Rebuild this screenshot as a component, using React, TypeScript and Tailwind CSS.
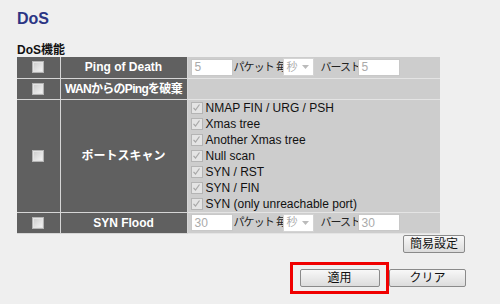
import React from "react";

const font = { fontFamily: '"Liberation Sans", Arial, "Noto Sans CJK JP", sans-serif' };

function Box({ checked }: { checked?: boolean }) {
  return (
    <span className="inline-flex h-[12px] w-[12px] items-center justify-center border border-[#b4b4b4] bg-[#e4e4e4]">
      {checked ? (
        <svg width="9" height="9" viewBox="0 0 9 9">
          <path d="M1.5 4.8 L3.5 7 L7.5 1.5" fill="none" stroke="#a8a8a8" strokeWidth="1.2" />
        </svg>
      ) : (
        <span className="h-[8px] w-[8px] bg-gradient-to-br from-[#cfcfcf] to-[#f2f2f2]" />
      )}
    </span>
  );
}

function Rate({ n }: { n: string }) {
  return (
    <div className="flex items-center text-[11px] text-[#222]">
      <span className="flex h-[17px] w-[42px] items-center border border-[#c8c8c8] bg-white pl-[3px] text-[12px] text-[#aaa]">{n}</span>
      <span className="ml-[1px] w-[48px] whitespace-nowrap tracking-[-0.9px]">パケット 毎</span>
      <span className="ml-[1px] flex h-[18px] w-[31px] items-center justify-between border border-[#d4d4d4] bg-white pl-[3px] pr-[4px] text-[#aaa]">
        秒
        <svg width="7" height="4" viewBox="0 0 7 4"><path d="M0 0 L7 0 L3.5 4 Z" fill="#bbb" /></svg>
      </span>
      <span className="ml-[7px] w-[37px] whitespace-nowrap tracking-[-1px]">バースト</span>
      <span className="flex h-[17px] w-[42px] items-center border border-[#c8c8c8] bg-white pl-[3px] text-[12px] text-[#aaa]">{n}</span>
    </div>
  );
}

export default function App() {
  const scans = [
    "NMAP FIN / URG / PSH",
    "Xmas tree",
    "Another Xmas tree",
    "Null scan",
    "SYN / RST",
    "SYN / FIN",
    "SYN (only unreachable port)",
  ];
  const dark = "bg-[#606060] text-white font-bold text-[12px] text-center border-r border-b border-[#d6d6d6] p-0";
  const light = "bg-[#cdcdcd] border-b border-[#e4e4e4] pl-[3px] pr-0 py-0";
  const btn = "h-[18px] rounded-[2px] border border-[#8a8a8a] bg-gradient-to-b from-[#f8f8f8] to-[#dcdcdc] text-[12px] leading-[16px] text-[#111]";
  return (
    <div className="h-[304px] w-[500px] bg-[#efefef] px-[17px] pt-[9px]" style={font}>
      <div className="text-[16px] font-bold leading-[20px] text-[#2b3584]">DoS</div>
      <div className="mt-[15px] text-[12px] font-bold leading-[12px] text-[#111]">DoS機能</div>
      <table className="mt-[1px] w-[423px] table-fixed border-collapse">
        <colgroup>
          <col className="w-[43px]" />
          <col className="w-[127px]" />
          <col />
        </colgroup>
        <tbody>
          <tr className="h-[21px]">
            <td className={dark}><div className="flex justify-center"><Box /></div></td>
            <td className={dark}>Ping of Death</td>
            <td className={light}><Rate n="5" /></td>
          </tr>
          <tr className="h-[21px]">
            <td className={dark}><div className="flex justify-center"><Box /></div></td>
            <td className={`${dark} whitespace-nowrap text-[11px] tracking-[-0.7px]`}>WANからのPingを破棄</td>
            <td className={light}></td>
          </tr>
          <tr className="h-[112px]">
            <td className={dark}><div className="flex justify-center"><Box /></div></td>
            <td className={`${dark} text-[11px]`}>ポートスキャン</td>
            <td className={light}>
              <div className="flex flex-col">
                {scans.map((s) => (
                  <div key={s} className="flex h-[16px] items-center gap-[3px] text-[12px] text-[#111]">
                    <Box checked />
                    <span>{s}</span>
                  </div>
                ))}
              </div>
            </td>
          </tr>
          <tr className="h-[21px]">
            <td className={dark}><div className="flex justify-center"><Box /></div></td>
            <td className={dark}>SYN Flood</td>
            <td className={light}><Rate n="30" /></td>
          </tr>
        </tbody>
      </table>
      <div className="flex w-[448px] justify-end pt-[1px]">
        <button className={`${btn} w-[62px]`}>簡易設定</button>
      </div>
      <div className="mt-[9px] flex w-[449px] justify-end">
        <div className="flex h-[32px] w-[99px] items-center justify-center border-[3px] border-[#f00000]">
          <button className={`${btn} w-[80px]`}>適用</button>
        </div>
        <button className={`${btn} mt-[7px] w-[77px]`}>クリア</button>
      </div>
    </div>
  );
}
